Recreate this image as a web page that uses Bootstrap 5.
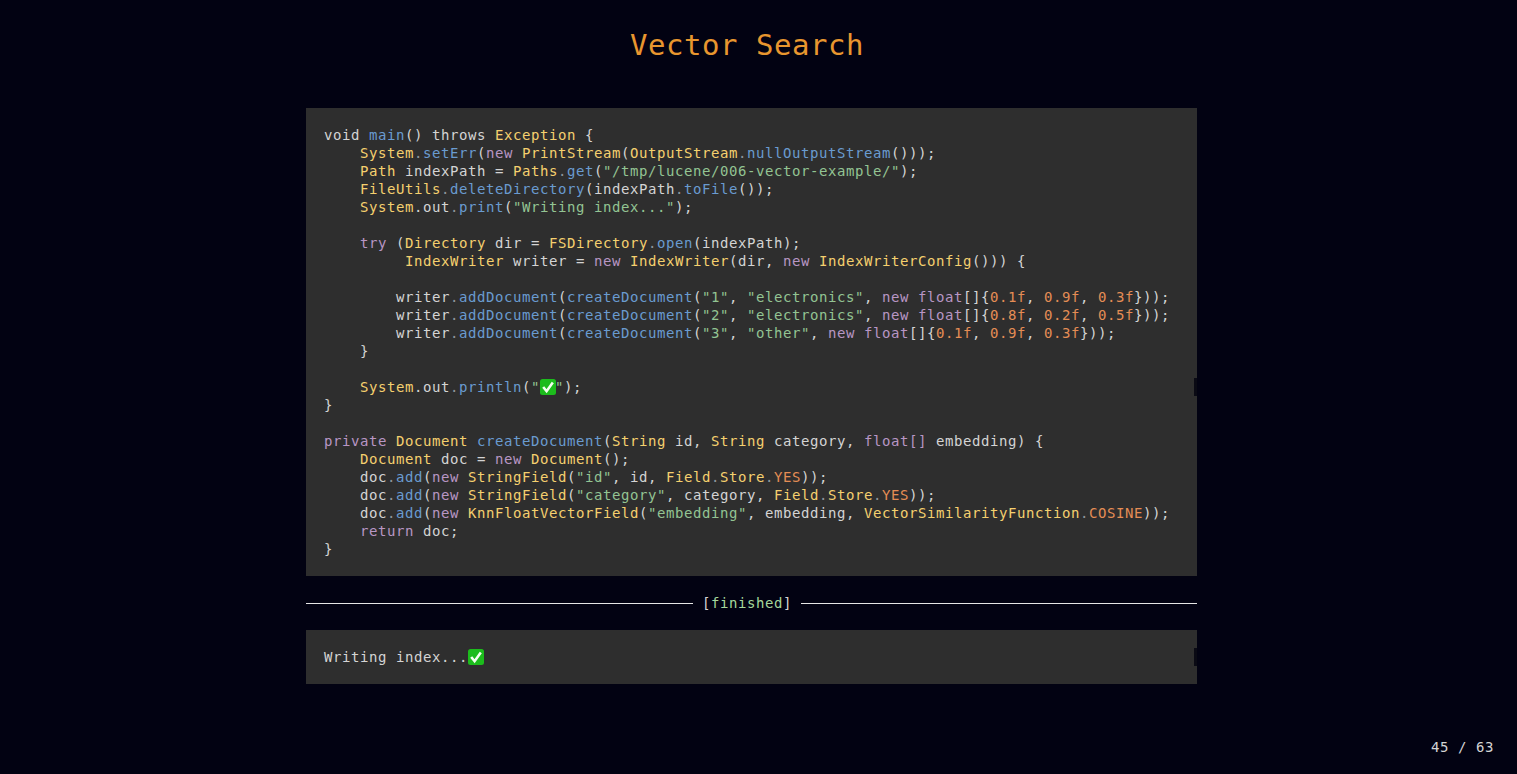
<!DOCTYPE html>
<html lang="en"><head><meta charset="utf-8"><title>Vector Search</title>
<link rel="stylesheet" href="https://cdn.jsdelivr.net/npm/bootstrap@5.3.0/dist/css/bootstrap.min.css">
<style>
html,body{height:100%}
body{background:#020212;color:#d4d4d4;font-family:"DejaVu Sans Mono",monospace;font-size:14px;letter-spacing:.57px;line-height:18px;overflow:hidden}
.deck{height:774px;padding:0 320px 0 306px}
.ttl{color:#e8962f;font-family:inherit;font-size:29px;letter-spacing:.54px;font-weight:400;line-height:36px;height:108px;padding:27px 9px 0 0;margin:0;text-align:center}
.code-box{background:#2e2e2e;color:#d4d4d4;font-family:inherit;font-size:14px;line-height:18px;margin:0;padding:18px;overflow:hidden;position:relative}
.code-box code{font:inherit;color:inherit}
.notch{position:absolute;right:0;width:3px;height:18px;background:#0a0a14}
.kw{color:#b896c4}.ty{color:#f5d06e}.fn{color:#6a9bd0}.st{color:#93c493}.nu{color:#e58d55}.dim{color:#8f959b}
.rule-row{height:54px;gap:9px}
.rule-l{width:387px;height:1px;background:#e6e6e6}
.rule-r{flex:1;height:1px;background:#e6e6e6}
.fin{color:#a6d89c}.br{color:#d4d4d4}
.tick{display:inline-block;width:16px;height:16px;vertical-align:top;margin:1px -1px 0 0}
.pager{position:absolute;right:23px;bottom:18px}
</style></head><body>
<main class="deck position-relative">
<h1 class="ttl">Vector Search</h1>
<pre class="code-box"><code class="d-block">void <span class="fn">main</span>() throws <span class="ty">Exception</span> {
    <span class="ty">System</span><span class="dim">.</span><span class="fn">setErr</span>(<span class="kw">new</span> <span class="ty">PrintStream</span>(<span class="ty">OutputStream</span><span class="dim">.</span><span class="fn">nullOutputStream</span>()));
    <span class="ty">Path</span> indexPath = <span class="ty">Paths</span><span class="dim">.</span><span class="fn">get</span>(<span class="st">"/tmp/lucene/006-vector-example/"</span>);
    <span class="ty">FileUtils</span><span class="dim">.</span><span class="fn">deleteDirectory</span>(indexPath<span class="dim">.</span><span class="fn">toFile</span>());
    <span class="ty">System</span>.out<span class="dim">.</span><span class="fn">print</span>(<span class="st">"Writing index..."</span>);

    <span class="kw">try</span> (<span class="ty">Directory</span> dir = <span class="ty">FSDirectory</span><span class="dim">.</span><span class="fn">open</span>(indexPath);
         <span class="ty">IndexWriter</span> writer = <span class="kw">new</span> <span class="ty">IndexWriter</span>(dir, <span class="kw">new</span> <span class="ty">IndexWriterConfig</span>())) {

        writer<span class="dim">.</span><span class="fn">addDocument</span>(<span class="fn">createDocument</span>(<span class="st">"1"</span>, <span class="st">"electronics"</span>, <span class="kw">new</span> <span class="kw">float</span>[]{<span class="nu">0.1f</span>, <span class="nu">0.9f</span>, <span class="nu">0.3f</span>}));
        writer<span class="dim">.</span><span class="fn">addDocument</span>(<span class="fn">createDocument</span>(<span class="st">"2"</span>, <span class="st">"electronics"</span>, <span class="kw">new</span> <span class="kw">float</span>[]{<span class="nu">0.8f</span>, <span class="nu">0.2f</span>, <span class="nu">0.5f</span>}));
        writer<span class="dim">.</span><span class="fn">addDocument</span>(<span class="fn">createDocument</span>(<span class="st">"3"</span>, <span class="st">"other"</span>, <span class="kw">new</span> <span class="kw">float</span>[]{<span class="nu">0.1f</span>, <span class="nu">0.9f</span>, <span class="nu">0.3f</span>}));
    }

    <span class="ty">System</span>.out<span class="dim">.</span><span class="fn">println</span>(<span class="st">"</span><svg class="tick" viewBox="0 0 16 16" role="img" aria-label="check mark"><rect width="16" height="16" rx="2.5" fill="#1cbc1c"/><path d="M3.2 8 6.6 12.2 12.8 3.6" fill="none" stroke="#f4fff0" stroke-width="2.6"/></svg><span class="st">"</span>);
}

<span class="kw">private</span> <span class="ty">Document</span> <span class="fn">createDocument</span>(<span class="ty">String</span> id, <span class="ty">String</span> category, <span class="kw">float[]</span> embedding) {
    <span class="ty">Document</span> doc = <span class="kw">new</span> <span class="ty">Document</span>();
    doc<span class="dim">.</span><span class="fn">add</span>(<span class="kw">new</span> <span class="ty">StringField</span>(<span class="st">"id"</span>, id, <span class="ty">Field</span><span class="dim">.</span><span class="ty">Store</span><span class="dim">.</span><span class="nu">YES</span>));
    doc<span class="dim">.</span><span class="fn">add</span>(<span class="kw">new</span> <span class="ty">StringField</span>(<span class="st">"category"</span>, category, <span class="ty">Field</span><span class="dim">.</span><span class="ty">Store</span><span class="dim">.</span><span class="nu">YES</span>));
    doc<span class="dim">.</span><span class="fn">add</span>(<span class="kw">new</span> <span class="ty">KnnFloatVectorField</span>(<span class="st">"embedding"</span>, embedding, <span class="ty">VectorSimilarityFunction</span><span class="dim">.</span><span class="nu">COSINE</span>));
    <span class="kw">return</span> doc;
}</code><i class="notch" style="top:270px"></i></pre>
<div class="rule-row d-flex align-items-center"><span class="rule-l"></span><span class="br">[<span class="fin">finished</span>]</span><span class="rule-r"></span></div>
<pre class="code-box">Writing index...<svg class="tick" viewBox="0 0 16 16" role="img" aria-label="check mark"><rect width="16" height="16" rx="2.5" fill="#1cbc1c"/><path d="M3.2 8 6.6 12.2 12.8 3.6" fill="none" stroke="#f4fff0" stroke-width="2.6"/></svg><i class="notch" style="top:18px"></i></pre>
<div class="pager">45 / 63</div>
</main>
<script src="https://cdn.jsdelivr.net/npm/bootstrap@5.3.0/dist/js/bootstrap.bundle.min.js"></script>
</body></html>
